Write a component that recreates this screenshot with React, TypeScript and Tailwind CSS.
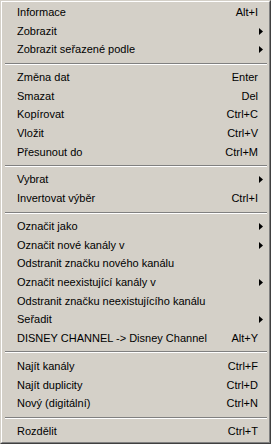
import React from "react";

type Item =
  | { sep: true }
  | { sep?: false; label: string; shortcut?: string; sub?: boolean };

const items: Item[] = [
  { label: "Informace", shortcut: "Alt+I" },
  { label: "Zobrazit", sub: true },
  { label: "Zobrazit seřazené podle", sub: true },
  { sep: true },
  { label: "Změna dat", shortcut: "Enter" },
  { label: "Smazat", shortcut: "Del" },
  { label: "Kopírovat", shortcut: "Ctrl+C" },
  { label: "Vložit", shortcut: "Ctrl+V" },
  { label: "Přesunout do", shortcut: "Ctrl+M" },
  { sep: true },
  { label: "Vybrat", sub: true },
  { label: "Invertovat výběr", shortcut: "Ctrl+I" },
  { sep: true },
  { label: "Označit jako", sub: true },
  { label: "Označit nové kanály v", sub: true },
  { label: "Odstranit značku nového kanálu" },
  { label: "Označit neexistující kanály v", sub: true },
  { label: "Odstranit značku neexistujícího kanálu" },
  { label: "Seřadit", sub: true },
  { label: "DISNEY CHANNEL -> Disney Channel", shortcut: "Alt+Y" },
  { sep: true },
  { label: "Najít kanály", shortcut: "Ctrl+F" },
  { label: "Najít duplicity", shortcut: "Ctrl+D" },
  { label: "Nový (digitální)", shortcut: "Ctrl+N" },
  { sep: true },
  { label: "Rozdělit", shortcut: "Ctrl+T" },
];

function Arrow() {
  return (
    <svg width="4" height="7" viewBox="0 0 4 7" className="block">
      <polygon points="0,0 4,3.5 0,7" fill="#000" />
    </svg>
  );
}

export default function App() {
  return (
    <div
      className="w-[271px] h-[444px] bg-[#d4d0c8] border border-t-[#d4d0c8] border-l-[#d4d0c8] border-r-[#404040] border-b-[#404040] text-black text-[11px] leading-none"
      style={{ fontFamily: '"Liberation Sans", Arial, sans-serif' }}
    >
      <div className="h-full border border-t-white border-l-white border-r-[#808080] border-b-[#808080] py-[1px] flex flex-col">
        {items.map((it, i) =>
          it.sep ? (
            <div key={i} className="h-[9px] flex items-center pl-[3px] pr-[2px]">
              <div className="w-full border-t border-t-[#808080] border-b border-b-white" />
            </div>
          ) : (
            <div key={i} className="h-[18.71px] flex items-center pl-[15px]">
              <span className="flex-1 whitespace-nowrap">{it.label}</span>
              {it.shortcut && <span className="pr-[11px] whitespace-nowrap">{it.shortcut}</span>}
              {it.sub && (
                <span className="pr-[6px]">
                  <Arrow />
                </span>
              )}
            </div>
          )
        )}
      </div>
    </div>
  );
}
